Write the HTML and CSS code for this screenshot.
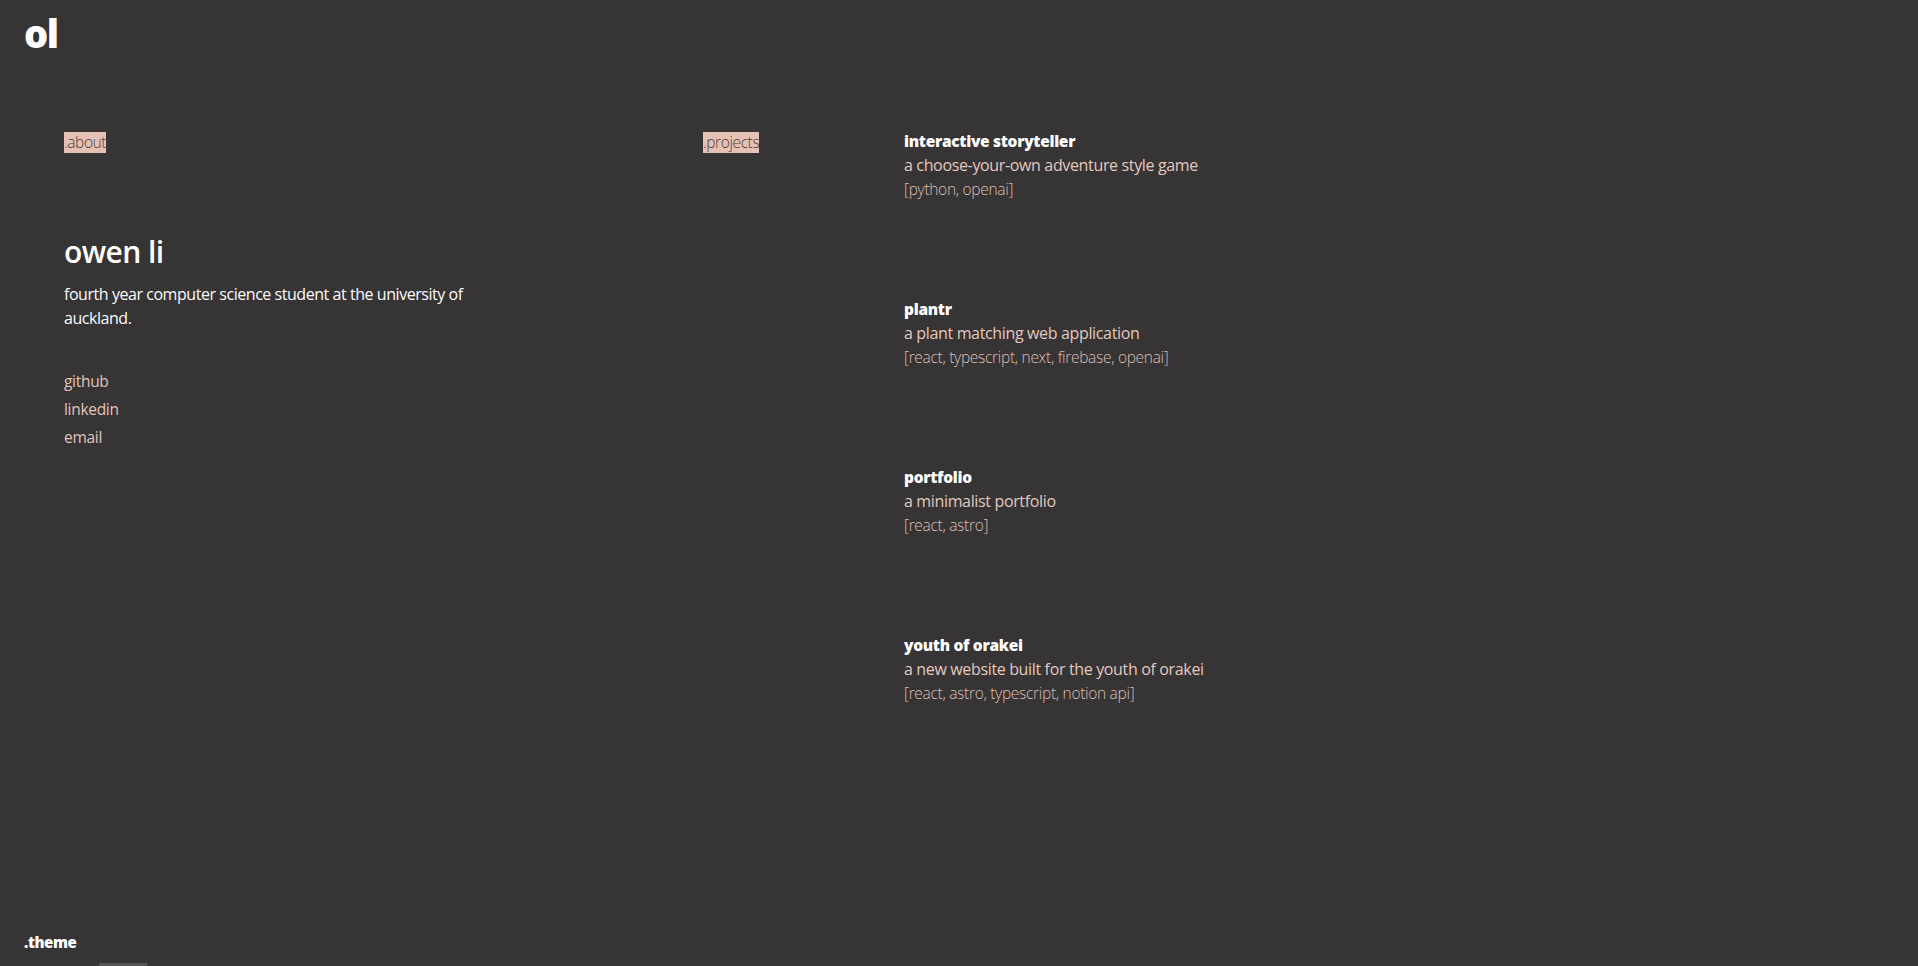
FILE: index.html
```html
<!DOCTYPE html>
<html lang="en">
<head>
<meta charset="utf-8">
<title>owen li</title>
<link rel="stylesheet" href="styles.css">
</head>
<body>
<div class="page">
  <header class="header">
    <a class="logo" href="#">ol</a>
  </header>
  <main class="main">
    <section class="about">
      <span class="label">.about</span>
      <h1 class="name">owen li</h1>
      <p class="bio">fourth year computer science student at the university of auckland.</p>
      <ul class="links">
        <li><a href="#">github</a></li>
        <li><a href="#">linkedin</a></li>
        <li><a href="#">email</a></li>
      </ul>
    </section>
    <section class="projects-label">
      <span class="label">.projects</span>
    </section>
    <section class="projects">
      <article class="project">
        <h2 class="project-title">interactive storyteller</h2>
        <p class="project-desc">a choose-your-own adventure style game</p>
        <p class="project-tags">[python, openai]</p>
      </article>
      <article class="project">
        <h2 class="project-title">plantr</h2>
        <p class="project-desc">a plant matching web application</p>
        <p class="project-tags">[react, typescript, next, firebase, openai]</p>
      </article>
      <article class="project">
        <h2 class="project-title">portfolio</h2>
        <p class="project-desc">a minimalist portfolio</p>
        <p class="project-tags">[react, astro]</p>
      </article>
      <article class="project">
        <h2 class="project-title">youth of orakei</h2>
        <p class="project-desc">a new website built for the youth of orakei</p>
        <p class="project-tags">[react, astro, typescript, notion api]</p>
      </article>
    </section>
  </main>
  <footer class="footer">
    <button class="theme">.theme</button>
    <div class="bar"></div>
  </footer>
</div>
</body>
</html>
```
FILE: styles.css
```css
* { box-sizing: border-box; }
html, body { margin: 0; padding: 0; }
body {
  background: #363435;
  color: #ffffff;
  font-family: "Open Sans", "Noto Sans", sans-serif;
  overflow: hidden;
}
a { color: inherit; text-decoration: none; }
.page {
  min-height: 100vh;
  height: 100vh;
  display: flex;
  flex-direction: column;
}
.header {
  padding: 14px 24px 0;
  height: 131px;
}
.logo {
  font-family: "Open Sans", sans-serif;
  font-weight: 800;
  font-size: 38px;
  letter-spacing: -1.5px;
  color: #ffffff;
  line-height: 1;
}
.main {
  flex: 1;
  display: grid;
  grid-template-columns: 639px 201px 1fr;
  padding-left: 64px;
  align-items: start;
}
.label {
  display: inline-block;
  background: #e6c1b3;
  color: #4b3e3b;
  font-size: 15.5px;
  font-weight: 300;
  line-height: 21px;
  height: 21px;
  letter-spacing: -0.4px;
}
.name {
  margin: 81px 0 0;
  font-size: 30px;
  font-weight: 600;
  line-height: 36px;
  letter-spacing: -0.6px;
}
.bio {
  margin: 12px 0 0;
  width: 430px;
  font-size: 16px;
  line-height: 24px;
  letter-spacing: -0.45px;
  color: #fbfbfb;
}
.links {
  list-style: none;
  margin: 37px 0 0;
  padding: 0;
  color: #e2c4b9;
  font-size: 15.5px;
  line-height: 28px;
  letter-spacing: -0.3px;
}
.projects {
  display: flex;
  flex-direction: column;
  gap: 96px;
  margin-top: -2px;
}
.project-title {
  margin: 0;
  font-family: "Open Sans", sans-serif;
  font-weight: 800;
  font-size: 15.5px;
  line-height: 24px;
  letter-spacing: -0.3px;
}
.project-desc {
  margin: 0;
  color: #e4c9bf;
  font-size: 16px;
  line-height: 24px;
  letter-spacing: -0.35px;
}
.project-tags {
  margin: 0;
  color: #dcbfb4;
  font-size: 15.5px;
  font-weight: 300;
  line-height: 24px;
  letter-spacing: -0.3px;
}
.footer {
  padding: 0 0 0 24px;
  height: 40px;
  display: flex;
  flex-direction: column;
  justify-content: flex-end;
}
.theme {
  align-self: flex-start;
  background: none;
  border: 0;
  padding: 0;
  color: #ffffff;
  font-family: "Open Sans", sans-serif;
  font-weight: 800;
  font-size: 15px;
  line-height: 20px;
  letter-spacing: -0.4px;
  cursor: pointer;
}
.bar {
  margin: 11px 0 0 75px;
  width: 48px;
  height: 3px;
  background: #555354;
}
```
